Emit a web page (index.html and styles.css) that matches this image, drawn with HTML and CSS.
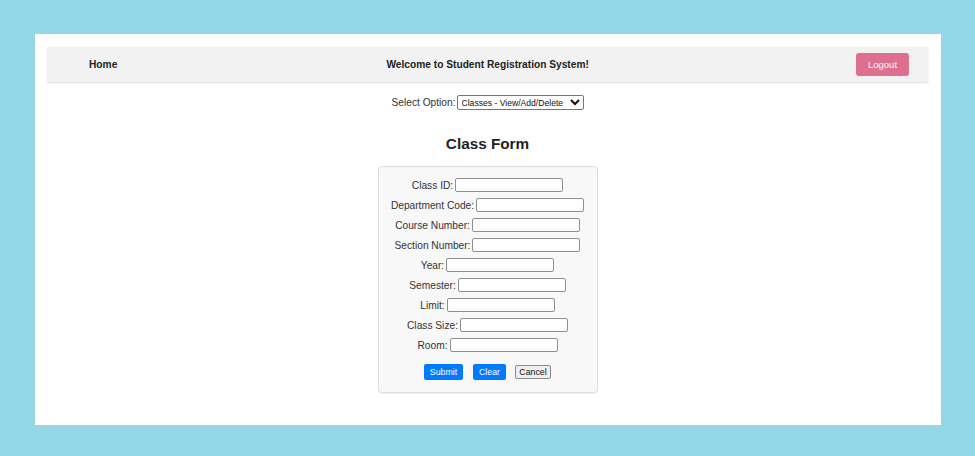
FILE: index.html
```html
<!DOCTYPE html>
<html>
<head>
<meta charset="utf-8">
<link rel="stylesheet" href="styles.css">
</head>
<body>
<div class="frame">
  <nav class="nav">
    <a class="home">Home</a>
    <span class="welcome">Welcome to Student Registration System!</span>
    <button class="logout">Logout</button>
  </nav>
  <div class="option-row">
    <label class="option-label">Select Option:</label><select class="option-select"><option>Classes - View/Add/Delete</option></select>
  </div>
  <h2 class="title">Class Form</h2>
  <form class="form">
    <div class="row"><label>Class ID:</label><input type="text"></div>
    <div class="row"><label>Department Code:</label><input type="text"></div>
    <div class="row"><label>Course Number:</label><input type="text"></div>
    <div class="row"><label>Section Number:</label><input type="text"></div>
    <div class="row"><label>Year:</label><input type="text"></div>
    <div class="row"><label>Semester:</label><input type="text"></div>
    <div class="row"><label>Limit:</label><input type="text"></div>
    <div class="row"><label>Class Size:</label><input type="text"></div>
    <div class="row"><label>Room:</label><input type="text"></div>
    <div class="buttons">
      <button type="button" class="btn-blue btn-submit">Submit</button>
      <button type="button" class="btn-blue btn-clear">Clear</button>
      <button type="button" class="btn-cancel">Cancel</button>
    </div>
  </form>
</div>
</body>
</html>
```
FILE: styles.css
```css
html, body {
  margin: 0;
  padding: 0;
}
body {
  background: #94d7e7;
  width: 975px;
  height: 456px;
  overflow: hidden;
  font-family: "Liberation Sans", Arial, sans-serif;
  color: #333;
}
.frame {
  margin: 34px 0 0 35px;
  width: 906px;
  height: 391px;
  background: #fff;
  padding: 13px 1px 0 0;
  box-sizing: border-box;
  display: flex;
  flex-direction: column;
  align-items: center;
}
.nav {
  width: 881px;
  height: 35px;
  background: #f2f2f2;
  box-shadow: 0 1px 2px rgba(0,0,0,0.15);
  display: flex;
  align-items: center;
  box-sizing: border-box;
  padding: 0 19px 0 42px;
  border-radius: 1px;
}
.home {
  font-size: 10.2px;
  font-weight: bold;
  color: #222;
}
.welcome {
  flex: 1;
  text-align: center;
  font-size: 10.2px;
  font-weight: bold;
  color: #222;
  padding-left: 2px;
}
.logout {
  width: 53px;
  height: 23px;
  border: none;
  border-radius: 3px;
  background: #de6f8f;
  color: #fff;
  font-family: "Liberation Sans", Arial, sans-serif;
  font-size: 9.5px;
  padding: 0;
}
.option-row {
  margin-top: 13px;
  display: flex;
  align-items: center;
  font-size: 10.2px;
  color: #333;
}
.option-select {
  margin-left: 1px;
  width: 127px;
  height: 15px;
  font-family: "Liberation Sans", Arial, sans-serif;
  font-size: 8.6px;
  padding: 0;
  border: 1px solid #767676;
  border-radius: 2px;
  background: #fff;
  color: #111;
}
.title {
  margin: 25px 0 0 0;
  font-size: 15.3px;
  font-weight: bold;
  color: #222;
  line-height: 18px;
}
.form {
  margin-top: 13px;
  width: 220px;
  height: 227px;
  box-sizing: border-box;
  background: #f8f8f8;
  border: 1px solid #ddd;
  border-radius: 4px;
  box-shadow: 0 1px 1px rgba(0,0,0,0.06);
  padding-top: 8px;
  display: flex;
  flex-direction: column;
  align-items: center;
}
.row {
  height: 20px;
  display: flex;
  align-items: center;
  justify-content: center;
  font-size: 10.2px;
  color: #333;
}
.row label {
  margin-right: 2px;
}
.row input {
  width: 108px;
  height: 14px;
  box-sizing: border-box;
  border: 1px solid #8f8f8f;
  border-radius: 2px;
  background: #fff;
  padding: 0;
}
.buttons {
  margin-top: 9px;
  display: flex;
  align-items: center;
}
.btn-blue {
  height: 16px;
  border: none;
  border-radius: 2px;
  background: #007bff;
  color: #fff;
  font-family: "Liberation Sans", Arial, sans-serif;
  font-size: 8.8px;
  padding: 0;
}
.btn-submit { width: 39px; margin-right: 10px; }
.btn-clear { width: 33px; margin-right: 9px; }
.btn-cancel {
  width: 36px;
  height: 14px;
  border: 1px solid #8a8a8a;
  border-radius: 2px;
  background: #efefef;
  color: #111;
  font-family: "Liberation Sans", Arial, sans-serif;
  font-size: 8.8px;
  padding: 0;
}
```
